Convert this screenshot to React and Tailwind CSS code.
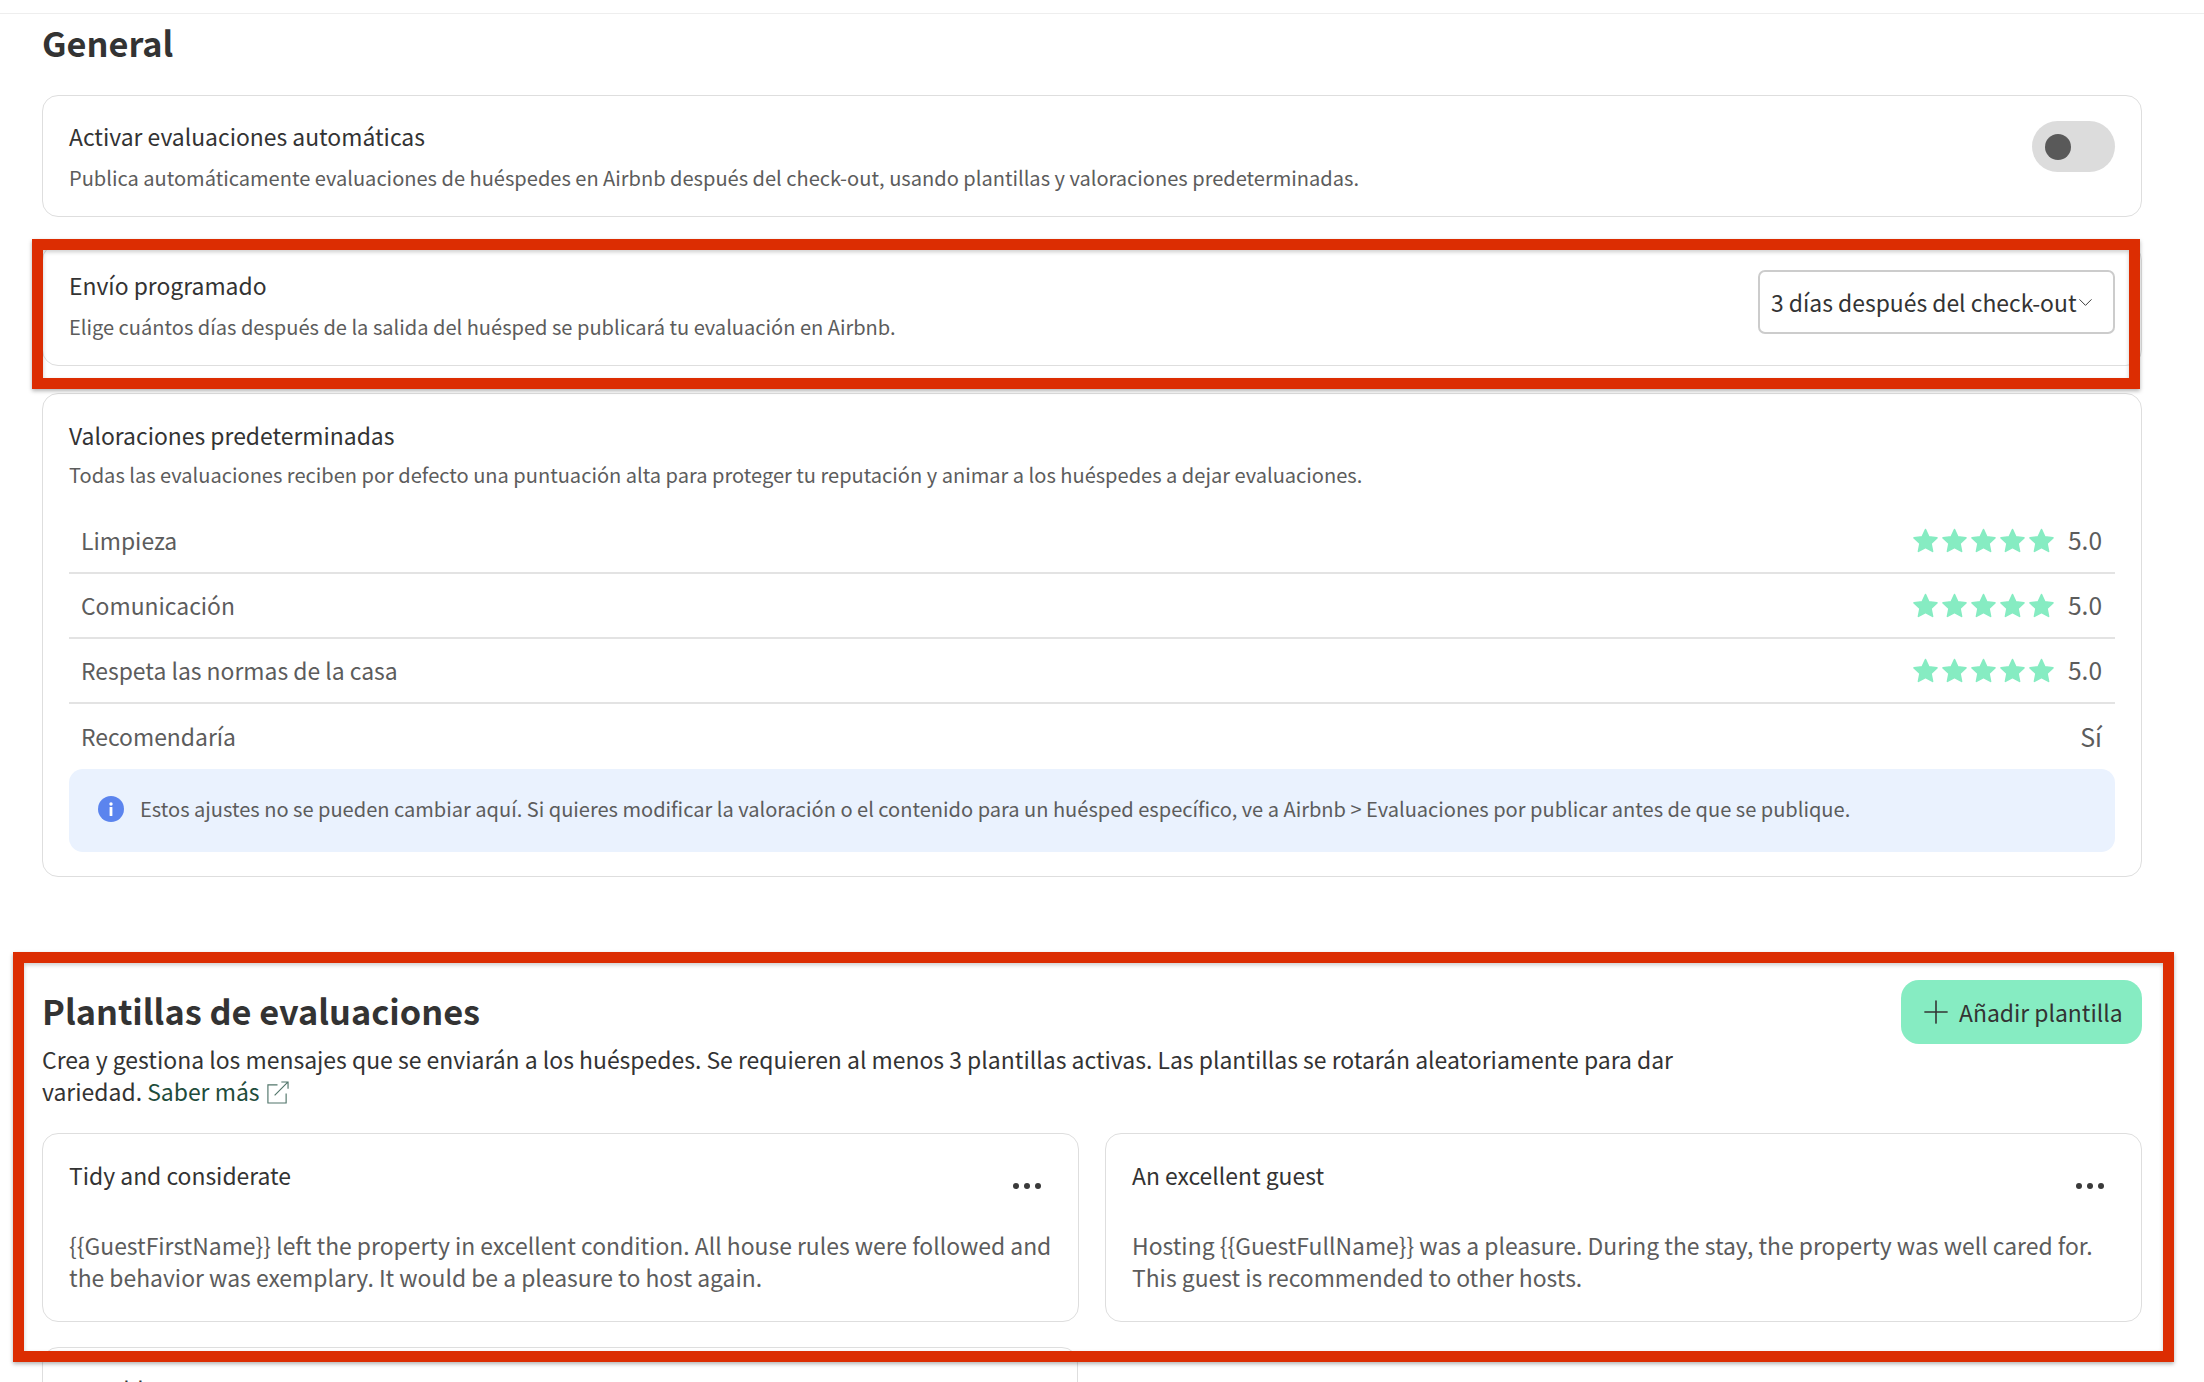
import { ChevronDown, Plus } from 'lucide-react';

const ratings = [
  { label: 'Limpieza', stars: true },
  { label: 'Comunicación', stars: true },
  { label: 'Respeta las normas de la casa', stars: true },
  { label: 'Recomendaría', value: 'Sí' },
];

const templates = [
  {
    title: 'Tidy and considerate',
    body: '{{GuestFirstName}} left the property in excellent condition. All house rules were followed and the behavior was exemplary. It would be a pleasure to host again.',
  },
  {
    title: 'An excellent guest',
    body: 'Hosting {{GuestFullName}} was a pleasure. During the stay, the property was well cared for. This guest is recommended to other hosts.',
  },
];

function Star() {
  return (
    <svg viewBox="0 0 24 24" className="w-[25px] h-[25px] fill-[#86ecc2] stroke-[#86ecc2] stroke-[1.5]" strokeLinejoin="round">
      <path d="M12 1.5l3.2 7 7.8 1-5.7 5.3 1.5 7.7L12 18.7l-6.8 3.8 1.5-7.7L1 9.5l7.8-1z" />
    </svg>
  );
}

function Dots() {
  return (
    <div className="flex gap-[5px] mt-[24px] mr-[11px]">
      <span className="w-[6px] h-[6px] rounded-full bg-[#3a3a3a]" />
      <span className="w-[6px] h-[6px] rounded-full bg-[#3a3a3a]" />
      <span className="w-[6px] h-[6px] rounded-full bg-[#3a3a3a]" />
    </div>
  );
}

function Card({ title, desc, children }) {
  return (
    <div className="h-full flex items-start justify-between border border-[#dedede] rounded-[16px] px-[26px] pt-[24px]">
      <div>
        <div className="text-[22.9px] leading-[32px] text-[#333]">{title}</div>
        <div className="text-[20.06px] leading-[28px] mt-[12px] text-[#5c5c5c]">{desc}</div>
      </div>
      {children}
    </div>
  );
}

export default function App() {
  return (
    <div className="relative h-[1382px] overflow-hidden bg-white font-['Noto_Sans_CJK_SC',sans-serif]">
      <div className="border-t border-[#eeeeee] mt-[13px]" />
      <div className="pl-[42px] w-[2142px]">
        <h2 className="text-[34.3px] leading-[48px] font-bold text-[#333] mt-[4px]">General</h2>

        <div className="mt-[29px] h-[122px]">
          <Card
            title="Activar evaluaciones automáticas"
            desc="Publica automáticamente evaluaciones de huéspedes en Airbnb después del check-out, usando plantillas y valoraciones predeterminadas."
          >
            <div className="w-[83px] h-[51px] mt-[1px] rounded-full bg-[#dcdcdc] flex items-center pl-[13px]">
              <span className="w-[26px] h-[26px] rounded-full bg-[#595959]" />
            </div>
          </Card>
        </div>

        <div className="mt-[27px] h-[122px]">
          <Card
            title="Envío programado"
            desc="Elige cuántos días después de la salida del huésped se publicará tu evaluación en Airbnb."
          >
            <div className="w-[357px] h-[64px] mt-[1px] border-2 border-[#cccccc] rounded-[7px] flex items-center pl-[11px] text-[22.9px] text-[#333] whitespace-nowrap">
              <span>3 días después del check-out</span>
              <ChevronDown size={23} strokeWidth={1} className="ml-[-3px]" />
            </div>
          </Card>
        </div>

        <div className="mt-[27px] h-[484px] border border-[#dedede] rounded-[16px] px-[26px]">
          <div className="text-[22.9px] leading-[32px] text-[#333] mt-[25px]">Valoraciones predeterminadas</div>
          <div className="text-[20.06px] leading-[28px] mt-[10px] text-[#5c5c5c]">
            Todas las evaluaciones reciben por defecto una puntuación alta para proteger tu reputación y animar a los huéspedes a dejar evaluaciones.
          </div>
          <div className="mt-[20px]">
            {ratings.map((r, i) => (
              <div
                key={r.label}
                className={`h-[65px] flex items-center justify-between pl-[12px] pr-[13px] text-[22.9px] text-[#5c5c5c] ${i < 3 ? 'border-b-2 border-[#e3e3e3]' : ''}`}
              >
                <span>{r.label}</span>
                {r.stars ? (
                  <div className="flex items-center">
                    <div className="flex gap-[4px] mr-[14px]">
                      <Star /><Star /><Star /><Star /><Star />
                    </div>
                    <span className="text-[24.5px]">5.0</span>
                  </div>
                ) : (
                  <span className="text-[25px]">{r.value}</span>
                )}
              </div>
            ))}
          </div>
          <div className="h-[83px] rounded-[14px] bg-[#eaf2fe] flex items-center pl-[29px] pb-[3px] gap-[16px] text-[20.06px] text-[#5c5c5c]">
            <svg viewBox="0 0 26 26" className="w-[26px] h-[26px] shrink-0">
              <circle cx="13" cy="13" r="13" fill="#5b84ee" />
              <circle cx="13" cy="8" r="1.7" fill="#fff" />
              <rect x="11.6" y="11" width="2.8" height="9" rx="0.6" fill="#fff" />
            </svg>
            <span>Estos ajustes no se pueden cambiar aquí. Si quieres modificar la valoración o el contenido para un huésped específico, ve a Airbnb &gt; Evaluaciones por publicar antes de que se publique.</span>
          </div>
        </div>

        <div className="mt-[103px] flex justify-between items-start">
          <div className="w-[1640px]">
            <h2 className="text-[34.3px] leading-[48px] font-bold text-[#333] mt-[6px]">Plantillas de evaluaciones</h2>
            <p className="text-[22.95px] leading-[32px] mt-[9px] text-[#333]">
              Crea y gestiona los mensajes que se enviarán a los huéspedes. Se requieren al menos 3 plantillas activas. Las plantillas se rotarán aleatoriamente para dar variedad.{' '}
              <a className="text-[#1f4d3c]">Saber más</a>
              <svg viewBox="0 0 24 24" fill="none" stroke="#51756a" strokeWidth="1.2" className="inline w-[23px] h-[23px] ml-[6px] align-[-3px]">
                <path d="M12 4H2v19h19V13" />
                <path d="M9 15L23 1M16 1h7v7" />
              </svg>
            </p>
          </div>
          <button className="w-[241px] h-[64px] rounded-[18px] bg-[#86ecc2] flex items-center pl-[16px] gap-[4px] text-[22.9px] text-[#333]">
            <Plus size={38} strokeWidth={1} />
            Añadir plantilla
          </button>
        </div>

        <div className="grid grid-cols-2 gap-[26px] mt-[26px]">
          {templates.map((t) => (
            <div key={t.title} className="h-[189px] border border-[#dedede] rounded-[16px] px-[26px] pt-[25px]">
              <div className="flex justify-between items-start h-[32px]">
                <div className="text-[22.9px] leading-[32px] text-[#333]">{t.title}</div>
                <Dots />
              </div>
              <div className="text-[22.9px] leading-[32px] mt-[38px] mr-[-6px] text-[#5c5c5c]">{t.body}</div>
            </div>
          ))}
        </div>

        <div className="w-[1036px] h-[120px] mt-[25px] border border-[#dedede] rounded-[16px] px-[26px] pt-[25px]">
          <div className="text-[22.9px] leading-[32px] text-[#333]">Capable guest</div>
        </div>
      </div>

      {/* red annotation boxes drawn over the page */}
      <div className="absolute left-[32px] top-[239px] w-[2108px] h-[150px] border-[11px] border-[#dc2d02] shadow-[0_2px_4px_rgba(0,0,0,0.3),inset_0_2px_4px_rgba(0,0,0,0.2)]" />
      <div className="absolute left-[13px] top-[952px] w-[2161px] h-[410px] border-[11px] border-[#dc2d02] shadow-[0_2px_4px_rgba(0,0,0,0.3),inset_0_2px_4px_rgba(0,0,0,0.2)]" />
    </div>
  );
}
